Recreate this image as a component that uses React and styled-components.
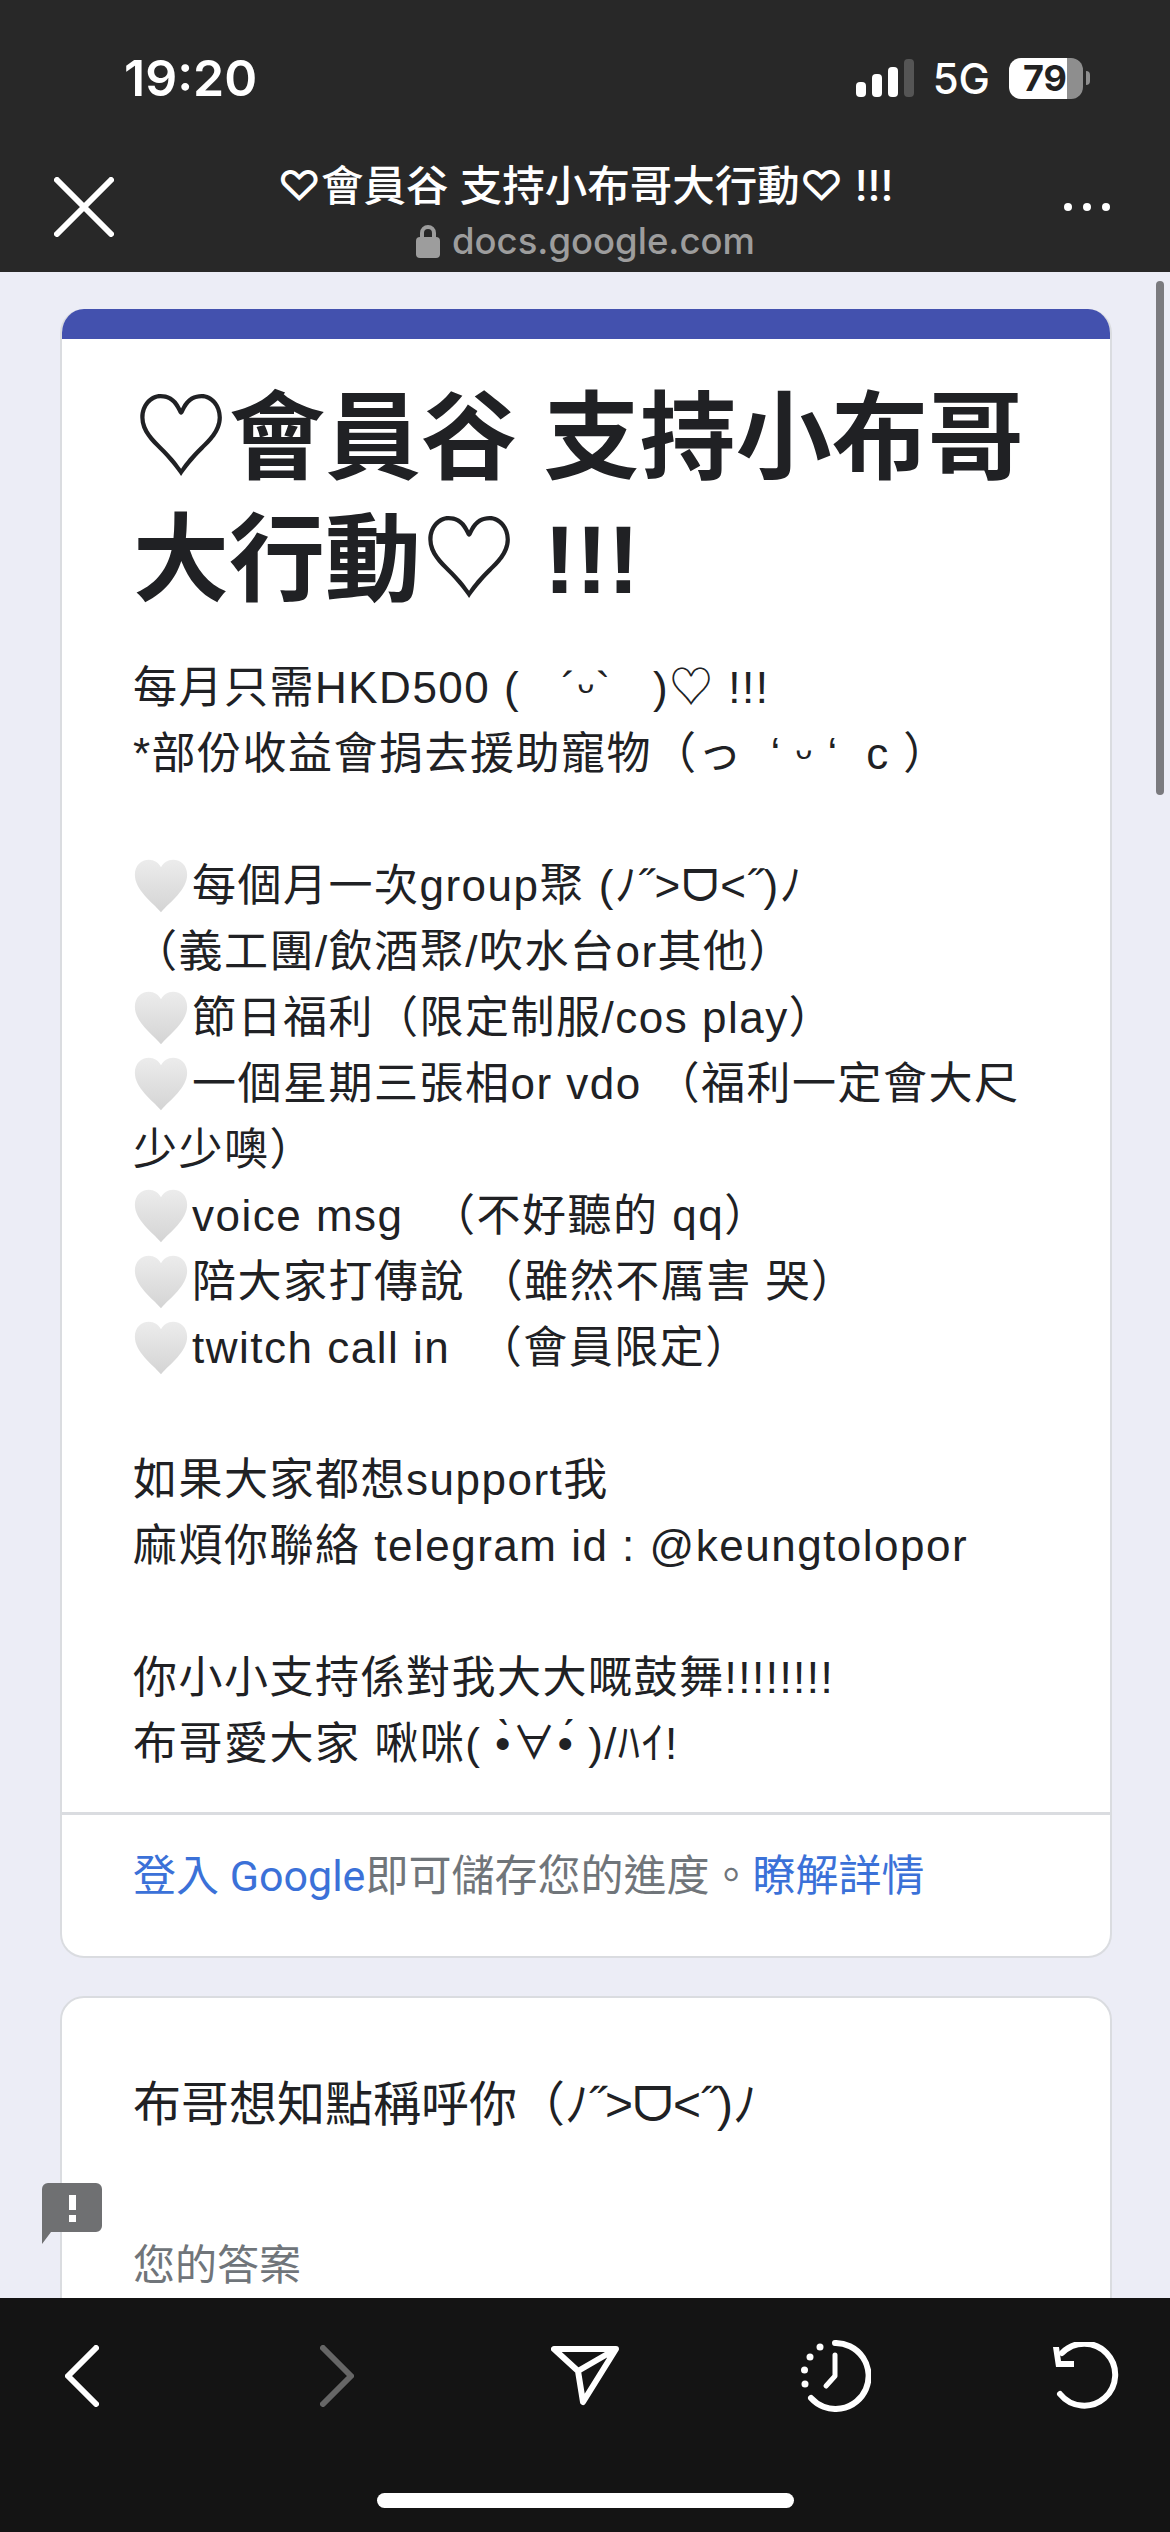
import React from 'react';
import styled, { createGlobalStyle } from 'styled-components';

const textFont = `"Liberation Sans", "Noto Sans CJK TC", "Noto Sans CJK JP", "DejaVu Sans", sans-serif`;
const footerFont = `Roboto, "Noto Sans CJK TC", sans-serif`;
const uiFont = `Inter, "Noto Sans CJK TC", sans-serif`;

const GlobalStyle = createGlobalStyle`
  html, body {
    margin: 0;
    padding: 0;
    background: #141414;
  }
  * {
    box-sizing: border-box;
  }
`;

const Heart = () => (
  <HeartIcon viewBox="0 0 60 60">
    <defs>
      <linearGradient id="heartFill" x1="0" y1="0" x2="0" y2="1">
        <stop offset="0" stopColor="#ececec" />
        <stop offset="1" stopColor="#d4d4d4" />
      </linearGradient>
    </defs>
    <path
      d="M30 58C20 47 2 34 2 18 2 8 9 2 17 2c6 0 10 3 13 8 3-5 7-8 13-8 8 0 15 6 15 16 0 16-18 29-28 40z"
      fill="url(#heartFill)"
    />
  </HeartIcon>
);

const lines = [
  { text: '每月只需HKD500 (   ´ᵕ`   )♡ !!!' },
  { text: '*部份收益會捐去援助寵物（っ  ‘ ᵕ ‘  c ）' },
  { text: '' },
  { text: '每個月一次group聚 (ﾉ˝>ᗜ<˝)ﾉ', heart: true },
  { text: '（義工團/飲酒聚/吹水台or其他）' },
  { text: '節日福利（限定制服/cos play）', heart: true },
  { text: '一個星期三張相or vdo （福利一定會大尺', heart: true },
  { text: '少少噢）' },
  { text: 'voice msg  （不好聽的 qq）', heart: true },
  { text: '陪大家打傳說 （雖然不厲害 哭）', heart: true },
  { text: 'twitch call in  （會員限定）', heart: true },
  { text: '' },
  { text: '如果大家都想support我' },
  { text: '麻煩你聯絡 telegram id : @keungtolopor' },
  { text: '' },
  { text: '你小小支持係對我大大嘅鼓舞!!!!!!!!' },
  { text: '布哥愛大家 啾咪( •̀∀•́ )/ﾊｲ!' },
];

const questionText = '布哥想知點稱呼你（ﾉ˝>ᗜ<˝)ﾉ';

export default function App() {
  return (
    <>
      <GlobalStyle />
      <Phone>
        <TopBar>
          <StatusBar>
            <Time>19:20</Time>
            <StatusIcons>
              <svg width="58" height="38" viewBox="0 0 58 38">
                <rect x="0" y="23" width="10" height="15" rx="4" fill="#fff" />
                <rect x="16" y="15" width="10" height="23" rx="4" fill="#fff" />
                <rect x="32" y="8" width="10" height="30" rx="4" fill="#fff" />
                <rect x="48" y="0" width="10" height="38" rx="4" fill="#555" />
              </svg>
              <Network>5G</Network>
              <Battery>
                <BatteryBody>79</BatteryBody>
                <BatteryCap />
              </Battery>
            </StatusIcons>
          </StatusBar>
          <NavBar>
            <svg width="60" height="60" viewBox="0 0 60 60">
              <path d="M3 3l54 54M57 3L3 57" stroke="#fff" strokeWidth="6" strokeLinecap="round" />
            </svg>
            <PageInfo>
              <PageTitle>♡會員谷 支持小布哥大行動♡ !!!</PageTitle>
              <PageUrl>
                <svg width="24" height="34" viewBox="0 0 24 34">
                  <path d="M6 15V9a6 6 0 0 1 12 0v6" fill="none" stroke="#9d9d9d" strokeWidth="4" />
                  <rect x="0" y="13" width="24" height="21" rx="4" fill="#9d9d9d" />
                </svg>
                docs.google.com
              </PageUrl>
            </PageInfo>
            <MoreDots>
              <Dot />
              <Dot />
              <Dot />
            </MoreDots>
          </NavBar>
        </TopBar>

        <Content>
          <FormCard>
            <AccentBar />
            <CardBody>
              <FormTitle>
                ♡會員谷 支持小布哥
                <br />
                大行動♡ !!!
              </FormTitle>
              <Description>
                {lines.map((line, i) => (
                  <Line key={i}>
                    {line.heart && <Heart />}
                    {line.text}
                  </Line>
                ))}
              </Description>
            </CardBody>
            <SignInRow>
              <TextLink>登入 Google</TextLink>即可儲存您的進度。<TextLink>瞭解詳情</TextLink>
            </SignInRow>
          </FormCard>

          <QuestionCard>
            <Question>{questionText}</Question>
            <AnswerHint>您的答案</AnswerHint>
          </QuestionCard>

          <ScrollThumb />
          <ReportBadge>
            <svg width="60" height="61" viewBox="0 0 60 61">
              <path d="M6 0h48a6 6 0 0 1 6 6v37a6 6 0 0 1-6 6H9L0 61V6a6 6 0 0 1 6-6z" fill="#6f7072" />
              <rect x="27" y="12" width="7" height="15" fill="#fff" />
              <rect x="27" y="32" width="7" height="7" fill="#fff" />
            </svg>
          </ReportBadge>
        </Content>

        <BottomBar>
          <ToolRow>
            <svg width="34" height="62" viewBox="0 0 34 62">
              <path d="M31 3L3 31l28 28" fill="none" stroke="#fff" strokeWidth="6" strokeLinecap="round" strokeLinejoin="round" />
            </svg>
            <svg width="34" height="62" viewBox="0 0 34 62">
              <path d="M3 3l28 28L3 59" fill="none" stroke="#666" strokeWidth="6" strokeLinecap="round" strokeLinejoin="round" />
            </svg>
            <svg width="68" height="60" viewBox="0 0 68 60">
              <path d="M3 3h62L32 56 27 25zM27 25L65 3" fill="none" stroke="#fff" strokeWidth="6" strokeLinejoin="round" />
            </svg>
            <svg width="70" height="72" viewBox="0 0 70 72">
              <path d="M34 3a33 33 0 1 1-24 55" fill="none" stroke="#fff" strokeWidth="6" strokeLinecap="round" />
              <path d="M34 15v21l-9 10" fill="none" stroke="#fff" strokeWidth="5" strokeLinecap="round" strokeLinejoin="round" />
              <circle cx="19" cy="7" r="3.5" fill="#fff" />
              <circle cx="9" cy="17" r="3.5" fill="#fff" />
              <circle cx="3.5" cy="30" r="3.5" fill="#fff" />
              <circle cx="4" cy="44" r="3.5" fill="#fff" />
            </svg>
            <svg width="68" height="68" viewBox="0 0 68 68">
              <path d="M11 11A31 31 0 1 1 9 52" fill="none" stroke="#fff" strokeWidth="6" strokeLinecap="round" />
              <path d="M2 5l3 20h18v-6H10L8 5z" fill="#fff" />
            </svg>
          </ToolRow>
          <HomeIndicator />
        </BottomBar>
      </Phone>
    </>
  );
}

const Phone = styled.div`
  width: 1170px;
  height: 2532px;
  display: flex;
  flex-direction: column;
  overflow: hidden;
  background: #ecedf6;
`;

const TopBar = styled.header`
  height: 272px;
  flex: none;
  background: #282828;
  color: #fff;
  font-family: ${uiFont};
`;

const StatusBar = styled.div`
  height: 156px;
  display: flex;
  align-items: center;
  justify-content: space-between;
  padding: 0 80px 0 124px;
`;

const Time = styled.div`
  font-size: 50px;
  font-weight: 600;
`;

const StatusIcons = styled.div`
  display: flex;
  align-items: center;
  gap: 19px;
`;

const Network = styled.div`
  font-size: 42px;
  font-weight: 500;
`;

const Battery = styled.div`
  display: flex;
  align-items: center;
  gap: 3px;
`;

const BatteryBody = styled.div`
  width: 74px;
  height: 41px;
  border-radius: 12px;
  background: linear-gradient(to right, #fff 78%, #8e8e8e 78%);
  color: #222;
  font-size: 36px;
  font-weight: 700;
  line-height: 41px;
  padding-left: 14px;
`;

const BatteryCap = styled.div`
  width: 4px;
  height: 14px;
  border-radius: 0 4px 4px 0;
  background: #8e8e8e;
`;

const NavBar = styled.div`
  height: 116px;
  display: flex;
  align-items: center;
  justify-content: space-between;
  padding: 0 60px 14px 54px;
`;

const PageInfo = styled.div`
  display: flex;
  flex-direction: column;
  align-items: center;
  gap: 6px;
  padding-top: 10px;
  margin-left: -7px;
`;

const PageTitle = styled.div`
  font-size: 42.5px;
  line-height: 52px;
  font-weight: 500;
  white-space: nowrap;
`;

const PageUrl = styled.div`
  display: flex;
  align-items: center;
  gap: 12px;
  color: #9d9d9d;
  font-size: 36.5px;
  line-height: 46px;
  font-weight: 500;
`;

const MoreDots = styled.div`
  display: flex;
  gap: 11px;
`;

const Dot = styled.span`
  width: 8px;
  height: 8px;
  border-radius: 50%;
  background: #fff;
`;

const Content = styled.main`
  position: relative;
  flex: 1;
  min-height: 0;
  overflow: hidden;
  padding: 37px 58px 0 60px;
  font-family: ${textFont};
  color: #202124;
`;

const FormCard = styled.section`
  background: #fff;
  border-radius: 24px;
  border: 2px solid #dadce0;
  border-top: none;
  overflow: hidden;
  margin-bottom: 38px;
`;

const AccentBar = styled.div`
  height: 30px;
  margin: 0 -2px;
  background: #4351ae;
`;

const CardBody = styled.div`
  padding: 0 71px 35px;
`;

const FormTitle = styled.h1`
  margin: 0;
  padding-top: 38px;
  font-size: 96px;
  line-height: 122px;
  font-weight: 700;
  white-space: nowrap;
`;

const Description = styled.div`
  margin-top: 34px;
  font-size: 44px;
  letter-spacing: 1.5px;
  line-height: 66px;
`;

const Line = styled.div`
  min-height: 66px;
  display: flex;
  align-items: center;
  white-space: pre;
`;

const HeartIcon = styled.svg`
  width: 56px;
  height: 56px;
  margin-right: 3px;
  flex: none;
`;

const SignInRow = styled.div`
  border-top: 3px solid #dadce0;
  height: 144px;
  padding: 33px 71px 0;
  font-family: ${footerFont};
  font-size: 43px;
  line-height: 56px;
  color: #70757a;
  white-space: nowrap;
`;

const TextLink = styled.span`
  color: #3b71d8;
`;

const QuestionCard = styled.section`
  background: #fff;
  border: 2px solid #dadce0;
  border-radius: 24px;
  padding: 74px 71px 0;
  height: 600px;
`;

const Question = styled.div`
  font-size: 48px;
  line-height: 66px;
  white-space: nowrap;
`;

const AnswerHint = styled.div`
  margin-top: 100px;
  font-size: 42px;
  line-height: 56px;
  color: #70757a;
`;

const ScrollThumb = styled.div`
  position: absolute;
  top: 9px;
  right: 6px;
  width: 8px;
  height: 514px;
  border-radius: 4px;
  background: #7a7a7e;
`;

const ReportBadge = styled.div`
  position: absolute;
  left: 42px;
  top: 1911px;
  line-height: 0;
`;

const BottomBar = styled.footer`
  height: 234px;
  flex: none;
  background: #141414;
  display: flex;
  flex-direction: column;
  align-items: center;
`;

const ToolRow = styled.div`
  width: 100%;
  height: 195px;
  display: grid;
  grid-template-columns: 255px 231px 250px 250px auto;
  align-items: center;
  padding: 0 0 40px 65px;
`;

const HomeIndicator = styled.div`
  width: 417px;
  height: 15px;
  border-radius: 8px;
  background: #fff;
`;
